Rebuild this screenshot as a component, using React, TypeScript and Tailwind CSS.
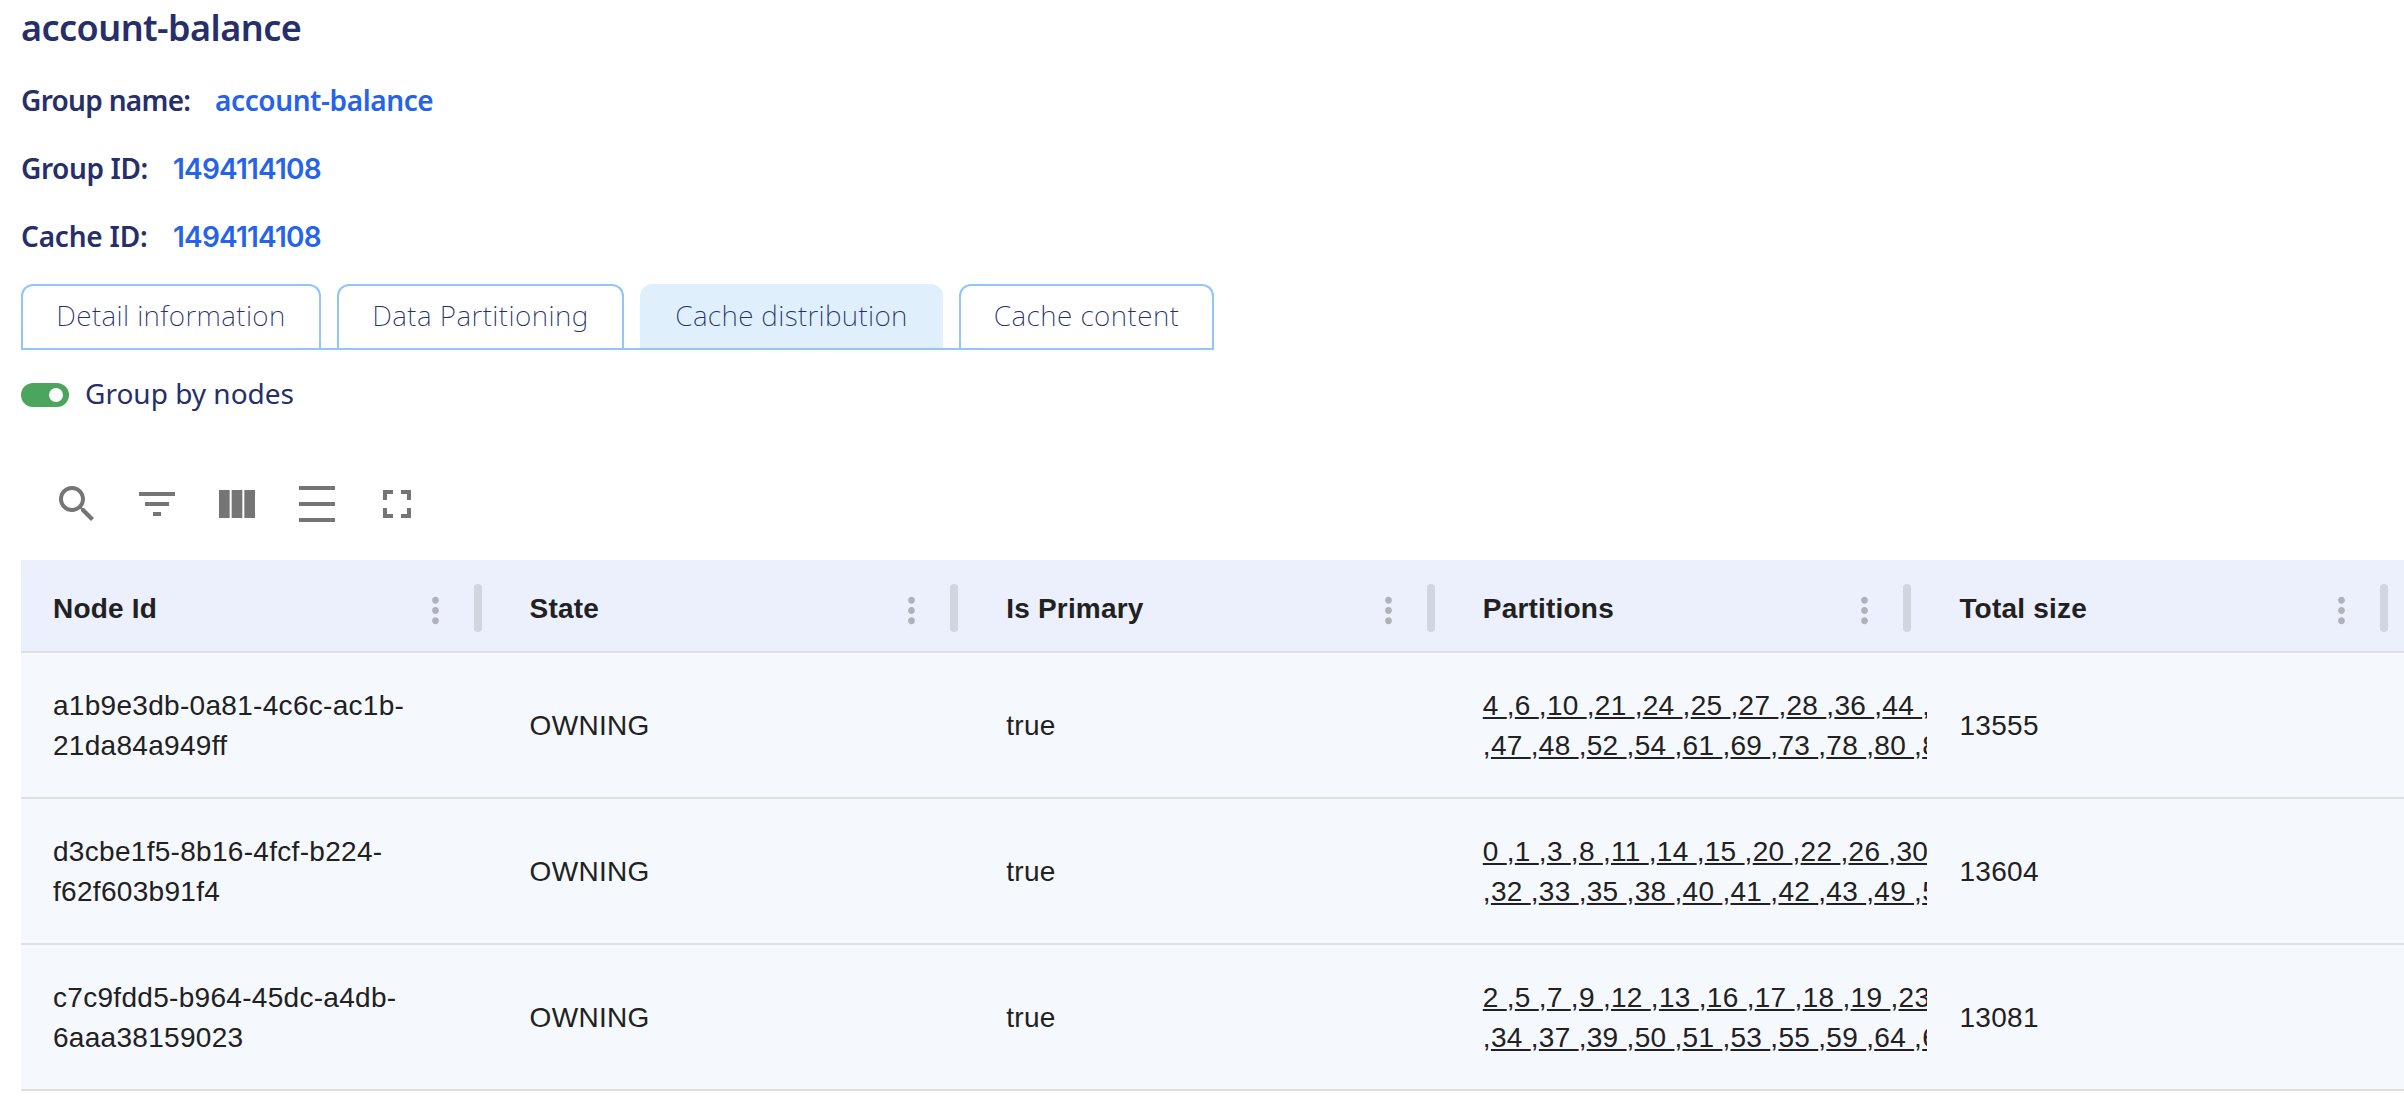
import { clsx } from "clsx";

const details = [
  { label: "Group name:", value: "account-balance", labelStyle: "w-[171px] tracking-[-0.7px]", valueStyle: "pl-[23px] tracking-[-0.4px]" },
  { label: "Group ID:", value: "1494114108", labelStyle: "w-[128px] tracking-[-0.4px]", valueStyle: "pl-[24px] font-['Inter',sans-serif] tracking-[-0.8px]" },
  { label: "Cache ID:", value: "1494114108", labelStyle: "w-[128px] tracking-[-0.2px]", valueStyle: "pl-[24px] font-['Inter',sans-serif] tracking-[-0.8px]" },
];

const tabs = [
  { label: "Detail information", width: "w-[300px] tracking-[0.4px]" },
  { label: "Data Partitioning", width: "w-[287px] tracking-[0.45px]" },
  { label: "Cache distribution", width: "w-[303px] tracking-[0.35px]", active: true },
  { label: "Cache content", width: "w-[255px] tracking-[0.45px]" },
];

const toolbar = [
  { name: "Search", d: "M15.5 14h-.79l-.28-.27C15.41 12.59 16 11.11 16 9.5 16 5.91 13.09 3 9.5 3S3 5.91 3 9.5 5.91 16 9.5 16c1.61 0 3.09-.59 4.23-1.57l.27.28v.79l5 4.99L20.49 19l-4.99-5zm-6 0C7.01 14 5 11.99 5 9.5S7.01 5 9.5 5 14 7.01 14 9.5 11.99 14 9.5 14z" },
  { name: "Filters", d: "M10 18h4v-2h-4v2zM3 6v2h18V6H3zm3 7h12v-2H6v2z" },
  { name: "Columns", d: "M14.67 5v14H9.33V5h5.34zm1 14H21V5h-5.33v14zm-7.34 0V5H3v14h5.33z" },
  { name: "Density", d: "M3 3h18v2H3zm0 16h18v2H3zm0-8h18v2H3z" },
  { name: "Full screen", d: "M7 14H5v5h5v-2H7v-3zm-2-4h2V7h3V5H5v5zm12 7h-3v2h5v-5h-2v3zM14 5v2h3v3h2V5h-5z" },
];

const columns = ["Node Id", "State", "Is Primary", "Partitions", "Total size"];

const rows = [
  {
    id: ["a1b9e3db-0a81-4c6c-ac1b-", "21da84a949ff"],
    partitions: [
      [4, 6, 10, 21, 24, 25, 27, 28, 36, 44],
      [47, 48, 52, 54, 61, 69, 73, 78, 80, 8],
    ],
    trailingComma: true,
    size: 13555,
  },
  {
    id: ["d3cbe1f5-8b16-4fcf-b224-", "f62f603b91f4"],
    partitions: [
      [0, 1, 3, 8, 11, 14, 15, 20, 22, 26, 30],
      [32, 33, 35, 38, 40, 41, 42, 43, 49, 5],
    ],
    size: 13604,
  },
  {
    id: ["c7c9fdd5-b964-45dc-a4db-", "6aaa38159023"],
    partitions: [
      [2, 5, 7, 9, 12, 13, 16, 17, 18, 19, 23],
      [34, 37, 39, 50, 51, 53, 55, 59, 64, 6],
    ],
    size: 13081,
  },
];

function PartitionLine({ items, leadingComma, trailingComma }: { items: number[]; leadingComma?: boolean; trailingComma?: boolean }) {
  return (
    <div className="whitespace-pre">
      {items.map((n, i) => (
        <span key={n}>
          {(i > 0 || leadingComma) && ","}
          <span className="underline decoration-2 underline-offset-[2px] [text-decoration-skip-ink:none]">{`${n} `}</span>
        </span>
      ))}
      {trailingComma && ","}
    </div>
  );
}

export default function App() {
  return (
    <div className="h-[1102px] w-full overflow-hidden bg-white pl-[21px] font-['Noto_Sans',sans-serif] text-[28px] text-[#272f6b]">
      <h1 className="mb-[10px] text-[36px] leading-[56px] font-semibold tracking-[-0.55px]">account-balance</h1>

      {details.map((d) => (
        <div key={d.label} className="flex h-[68px] items-baseline leading-[68px] font-semibold">
          <span className={clsx("whitespace-nowrap", d.labelStyle)}>{d.label}</span>
          <span className={clsx("text-[#2563eb]", d.valueStyle)}>{d.value}</span>
        </div>
      ))}

      <div className="mt-[14px] flex h-[66px] w-[1193px] gap-4 border-b-2 border-[#93c5fd]">
        {tabs.map((t) => (
          <button
            key={t.label}
            className={clsx(
              "flex h-16 items-center justify-center rounded-t-xl pb-1 font-[250] whitespace-nowrap",
              t.width,
              t.active ? "bg-[#dff0fc] pt-[2px]" : "border-2 border-b-0 border-[#93c5fd]",
            )}
          >
            {t.label}
          </button>
        ))}
      </div>

      <div className="mt-[33px] flex h-6 items-center gap-4">
        <div className="flex h-6 w-12 items-center justify-end rounded-full bg-[#4ba55c] pr-[6px]">
          <div className="size-[14px] rounded-full bg-white" />
        </div>
        <span className="-mt-1 leading-6">Group by nodes</span>
      </div>

      <div className="mt-[57px] flex h-20 pl-4">
        {toolbar.map((icon) => (
          <button key={icon.name} aria-label={icon.name} className="size-20 p-4">
            <svg viewBox="0 0 24 24" className="size-12 fill-[#757575]">
              <path d={icon.d} />
            </svg>
          </button>
        ))}
      </div>

      <div className="mt-4 font-['Liberation_Sans',Arial,sans-serif] text-[#212121]">
        <div className="grid h-[93px] grid-cols-5 border-b-2 border-[#e0e0e0] bg-[#ecf0fd]">
          {columns.map((c) => (
            <div key={c} className="flex items-center pt-[5px] pr-4 pl-8 font-bold">
              <span className="flex-1 pt-[2px] leading-10 tracking-[0.2px]">{c}</span>
              <svg viewBox="0 0 24 24" className="mt-[5px] mr-[18px] size-[41px] fill-[#afb2bb]">
                <path d="M12 8c1.1 0 2-.9 2-2s-.9-2-2-2-2 .9-2 2 .9 2 2 2zm0 2c-1.1 0-2 .9-2 2s.9 2 2 2 2-.9 2-2-.9-2-2-2zm0 6c-1.1 0-2 .9-2 2s.9 2 2 2 2-.9 2-2-.9-2-2-2z" />
              </svg>
              <div className="h-12 w-2 rounded bg-[#d1d5e0]" />
            </div>
          ))}
        </div>
        {rows.map((r) => (
          <div key={r.size} className="grid h-[146px] grid-cols-5 border-b-2 border-[#e0e0e0] bg-[#f5f8fd] pt-[2px] leading-10 tracking-[0.3px]">
            <div className="flex flex-col justify-center pl-8">
              {r.id.map((part) => (
                <div key={part}>{part}</div>
              ))}
            </div>
            <div className="flex items-center pl-8">OWNING</div>
            <div className="flex items-center pl-8">true</div>
            <div className="flex min-w-0 flex-col justify-center overflow-hidden pl-8">
              <PartitionLine items={r.partitions[0]} trailingComma={r.trailingComma} />
              <PartitionLine items={r.partitions[1]} leadingComma />
            </div>
            <div className="flex items-center pl-8">{r.size}</div>
          </div>
        ))}
      </div>
    </div>
  );
}
